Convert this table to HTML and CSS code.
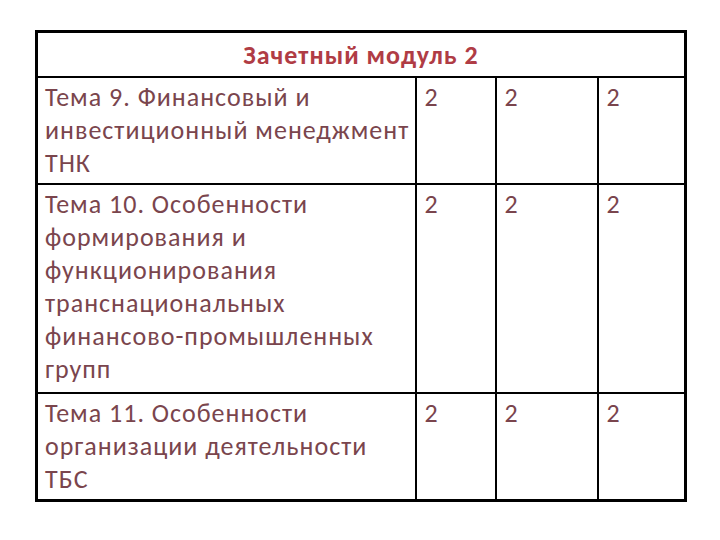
FILE: index.html
```html
<!DOCTYPE html>
<html lang="ru">
<head>
<meta charset="utf-8">
<link rel="stylesheet" href="styles.css">
</head>
<body>
<table class="grid">
  <colgroup>
    <col class="c-topic">
    <col class="c-a">
    <col class="c-b">
    <col class="c-c">
  </colgroup>
  <tr class="row-head">
    <th colspan="4" class="head">Зачетный модуль 2</th>
  </tr>
  <tr class="row-1">
    <td class="topic">Тема 9. Финансовый и<br>инвестиционный менеджмент<br>ТНК</td>
    <td class="num">2</td>
    <td class="num">2</td>
    <td class="num">2</td>
  </tr>
  <tr class="row-2">
    <td class="topic">Тема 10. Особенности<br>формирования и<br>функционирования<br>транснациональных<br>финансово-промышленных<br>групп</td>
    <td class="num">2</td>
    <td class="num">2</td>
    <td class="num">2</td>
  </tr>
  <tr class="row-3">
    <td class="topic">Тема 11. Особенности<br>организации деятельности<br>ТБС</td>
    <td class="num">2</td>
    <td class="num">2</td>
    <td class="num">2</td>
  </tr>
</table>
</body>
</html>
```
FILE: styles.css
```css
html, body {
  margin: 0;
  padding: 0;
  background: #ffffff;
}
body {
  width: 720px;
  height: 540px;
  font-family: "Carlito", "Lato", "Liberation Sans", sans-serif;
}
.grid {
  margin: 30px 0 0 35px;
  width: 649px;
  border-collapse: collapse;
  table-layout: fixed;
  border: 3px solid #000;
}
.c-topic { width: 379px; }
.c-a { width: 80px; }
.c-b { width: 102px; }
.c-c { width: 88px; }
.grid td, .grid th {
  border: 2px solid #000;
  vertical-align: top;
  padding: 0;
}
.head {
  height: 43px;
  vertical-align: middle !important;
  text-align: center;
  font-weight: 700;
  font-size: 26px;
  letter-spacing: 1px;
  color: #b03c45;
}
.topic, .num {
  font-size: 26px;
  line-height: 33px;
  letter-spacing: 1px;
  color: #7a454d;
  padding: 3px 6px 3px 7px !important;
  white-space: nowrap;
}
.num {
  padding-left: 8px !important;
}
.row-1 td { height: 99px; }
.row-2 td { height: 201px; }
.row-3 td { height: 98px; }
```
